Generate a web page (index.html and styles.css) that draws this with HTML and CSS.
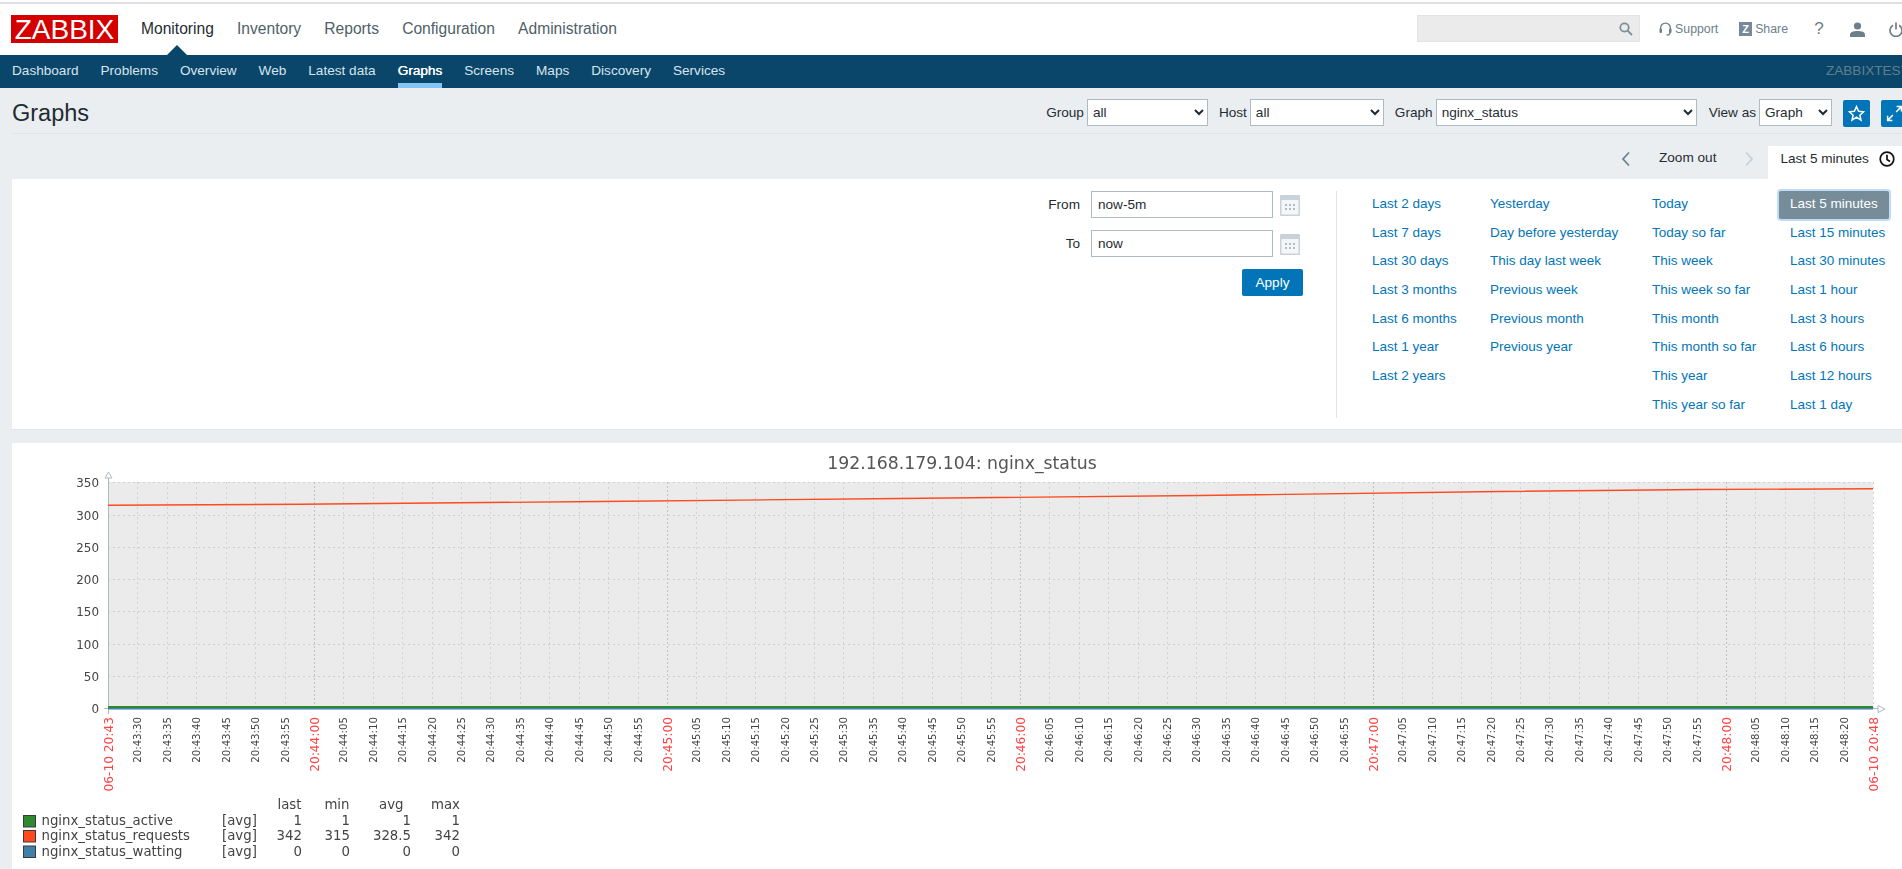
FILE: index.html
```html
<!DOCTYPE html>
<html lang="en">
<head>
<meta charset="utf-8">
<title>Graphs</title>
<link rel="stylesheet" href="styles.css">
</head>
<body>
<div class="page">
  <div class="edge"></div>
  <header class="top">
    <div class="logo">ZABBIX</div>
    <nav class="mainnav">
      <a class="on">Monitoring<i class="caret"></i></a><a>Inventory</a><a>Reports</a><a>Configuration</a><a>Administration</a>
    </nav>
    <div class="tools">
      <div class="search">
        <svg class="ic-search" viewBox="0 0 14 14"><circle cx="5.500" cy="5.500" r="4.200"/><path d="M8.600 8.600 13 13"/></svg>
      </div>
      <a class="tool support"><svg viewBox="0 0 13 14"><path d="M1.600 8V6a4.900 4.900 0 0 1 9.800 0v2"/><rect class="fill" x=".5" y="6.500" width="2.500" height="4.500" rx="1"/><rect class="fill" x="10" y="6.500" width="2.500" height="4.500" rx="1"/><path d="M11 10.500c0 2-1.600 2.600-3.500 2.600"/></svg>Support</a>
      <a class="tool share"><span class="zbox">Z</span>Share</a>
      <span class="help">?</span>
      <svg class="ic-user" viewBox="0 0 15 15"><circle class="fill" cx="7.500" cy="4" r="3.600"/><path class="fill" d="M0 15v-2.400C0 10 3.500 9 7.500 9s7.500 1 7.500 3.600V15z"/></svg>
      <svg class="ic-power" viewBox="0 0 14 15"><path d="M4 3.200a6 6 0 1 0 6 0M7 .5v7"/></svg>
    </div>
  </header>
  <nav class="subnav">
    <a>Dashboard</a><a>Problems</a><a>Overview</a><a>Web</a><a>Latest data</a><a class="on">Graphs</a><a>Screens</a><a>Maps</a><a>Discovery</a><a>Services</a>
    <span class="server">ZABBIXTEST</span>
  </nav>
  <div class="titlebar">
    <h1>Graphs</h1>
    <form class="filters">
      <label>Group</label>
      <select class="s-group"><option>all</option></select>
      <label class="lg">Host</label>
      <select class="s-host"><option>all</option></select>
      <label class="lg">Graph</label>
      <select class="s-graph"><option>nginx_status</option></select>
      <label class="lg">View as</label>
      <select class="s-view"><option>Graph</option></select>
      <button type="button" class="iconbtn first"><svg viewBox="0 0 16 16"><path d="M8 1.500l2 4.400 4.700.5-3.500 3.200 1 4.700L8 11.400l-4.200 2.900 1-4.700L1.300 6.400l4.700-.5z"/></svg></button>
      <button type="button" class="iconbtn"><svg viewBox="0 0 16 16"><path d="M9.500 6.500 14 2M10 1.500h4.500V6M6.500 9.500 2 14M1.500 10v4.500H6"/></svg></button>
    </form>
  </div>
  <div class="timebar">
    <svg class="chev" viewBox="0 0 10 16"><path d="M8 1.500 2 8l6 6.500"/></svg>
    <a class="zoomout">Zoom out</a>
    <svg class="chev off" viewBox="0 0 10 16"><path d="M2 1.500 8 8l-6 6.500"/></svg>
    <div class="tab">Last 5 minutes<svg class="clock" viewBox="0 0 16 16"><circle cx="8" cy="8" r="6.800"/><path d="M8 3.800V8.500l3 2"/></svg></div>
  </div>
  <section class="panel picker">
    <div class="range">
      <div class="rangerow"><label>From</label><input value="now-5m"><svg class="cal" viewBox="0 0 20 21"><rect width="20" height="21" rx="1"/><rect class="cal-in" x="1.500" y="5" width="17" height="14.500"/><path class="cal-dots" d="M5 9h2v2H5zM9 9h2v2H9zM13 9h2v2h-2zM5 13h2v2H5zM9 13h2v2H9zM13 13h2v2h-2z"/></svg></div>
      <div class="rangerow"><label>To</label><input value="now"><svg class="cal" viewBox="0 0 20 21"><rect width="20" height="21" rx="1"/><rect class="cal-in" x="1.500" y="5" width="17" height="14.500"/><path class="cal-dots" d="M5 9h2v2H5zM9 9h2v2H9zM13 9h2v2h-2zM5 13h2v2H5zM9 13h2v2H9zM13 13h2v2h-2z"/></svg></div>
      <button type="button" class="apply">Apply</button>
    </div>
    <div class="quick">
      <div class="col c1"><a>Last 2 days</a><a>Last 7 days</a><a>Last 30 days</a><a>Last 3 months</a><a>Last 6 months</a><a>Last 1 year</a><a>Last 2 years</a></div>
      <div class="col c2"><a>Yesterday</a><a>Day before yesterday</a><a>This day last week</a><a>Previous week</a><a>Previous month</a><a>Previous year</a></div>
      <div class="col c3"><a>Today</a><a>Today so far</a><a>This week</a><a>This week so far</a><a>This month</a><a>This month so far</a><a>This year</a><a>This year so far</a></div>
      <div class="col c4"><a class="sel">Last 5 minutes</a><a>Last 15 minutes</a><a>Last 30 minutes</a><a>Last 1 hour</a><a>Last 3 hours</a><a>Last 6 hours</a><a>Last 12 hours</a><a>Last 1 day</a></div>
    </div>
  </section>
  <section class="panel graphpanel">
    <svg id="graph" class="graph" viewBox="12 443 1908 427" width="1908" height="427"></svg>
  </section>
</div>
<script src="graph.js"></script>
</body>
</html>
```

FILE: styles.css
```css
html, body { margin: 0; height: 100%; overflow: hidden; }
body { background: #ebeef0; font-family: "Liberation Sans", Arial, sans-serif; font-size: 13.6px; color: #1f2c33; }
a { cursor: pointer; }
.page { width: 1920px; height: 869px; overflow: hidden; }
.edge { height: 2px; background: #fff; border-bottom: 2px solid #dfe0e7; }

.top { height: 51px; background: #fff; display: flex; box-sizing: border-box; padding-left: 11px; }
.logo { width: 107px; height: 28px; margin-top: 11px; background: #d40000; color: #fff; font-size: 28px; line-height: 29px; text-align: center; }
.mainnav { display: flex; gap: 23.200px; margin-left: 23px; font-size: 15.6px; line-height: 49px; color: #4e5f69; }
.mainnav a { position: relative; height: 51px; }
.mainnav a.on { color: #1f2c33; }
.caret { position: absolute; left: 26px; bottom: 0; width: 0; height: 0; border: 10.500px solid transparent; border-top: 0; border-bottom-color: #0a466a; }

.tools { margin-left: auto; margin-right: 17px; display: flex; align-items: flex-start; color: #6c7f8a; font-size: 12.300px; }
.search { width: 223px; height: 27px; margin: 11px 1px 0 0; background: #ebebeb; border: 1px solid #e3e3e3; box-sizing: border-box; display: flex; align-items: center; justify-content: flex-end; padding-right: 6px; }
.ic-search { width: 14px; height: 14px; fill: none; stroke: #7d8f99; stroke-width: 1.800; }
.tool { display: flex; align-items: center; height: 27px; margin-top: 11px; white-space: nowrap; }
.tool svg { width: 13px; height: 14px; fill: none; stroke: #6c7f8a; stroke-width: 1.300; margin-right: 3px; }
.tool svg .fill, .ic-user .fill { fill: #6c7f8a; stroke: none; }
.support { margin-left: 18px; }
.share { margin-left: 21px; }
.zbox { width: 13px; height: 14px; background: #76889a; color: #fff; font-weight: 700; font-size: 11px; line-height: 14px; text-align: center; margin-right: 3px; }
.help { margin: 13px 0 0 26px; font-size: 17px; line-height: 24px; width: 10px; text-align: center; }
.ic-user { width: 15px; height: 15px; margin: 18px 0 0 26px; }
.ic-power { width: 14px; height: 15px; margin: 18px 0 0 24px; fill: none; stroke: #6c7f8a; stroke-width: 1.700; }

.subnav { height: 33px; background: #0a466a; display: flex; gap: 22px; padding-left: 12px; line-height: 32px; color: #d7e4ec; position: relative; }
.subnav a { height: 33px; box-sizing: border-box; white-space: nowrap; }
.subnav a.on { color: #fff; border-bottom: 5px solid #84c5f4; text-shadow: .3px 0 0 #fff; }
.server { margin-left: auto; margin-right: 11px; color: #5f7f91; }

.titlebar { height: 45px; margin-left: 11px; border-bottom: 1px solid #dfe4e7; display: flex; align-items: flex-start; justify-content: space-between; }
h1 { margin: 0 0 0 1px; font-size: 23.500px; font-weight: 400; line-height: 51px; color: #1f2c33; }
.filters { display: flex; align-items: flex-start; margin: 11px 12px 0 0; }
.filters label { line-height: 27px; margin-right: 3px; color: #1f2c33; }
.filters label.lg { margin-left: 11px; }
select { height: 27px; box-sizing: border-box; background: #fff; border: 1px solid #acbbc4; font: inherit; color: #1f2c33; border-radius: 0; padding: 0 0 0 1px; }
.s-group { width: 121px; }
.s-host { width: 134px; }
.s-graph { width: 261px; margin-right: 1px; }
.s-view { width: 73px; }
.iconbtn { width: 27px; height: 27px; margin: 1px 0 0 11px; padding: 5px; background: #0275b8; border: 0; border-radius: 2px; }
.iconbtn svg { display: block; width: 17px; height: 17px; fill: none; stroke: #fff; stroke-width: 1.400; }

.timebar { height: 45px; display: flex; align-items: flex-start; padding-left: 1621px; }
.chev { width: 10px; height: 16px; margin-top: 17px; fill: none; stroke: #6b8190; stroke-width: 1.800; }
.chev.off { stroke: #c6d1d7; margin-left: 28px; }
.zoomout { margin: 0 0 0 28px; line-height: 48px; color: #1f2c33; white-space: nowrap; }
.tab { margin: 12px 0 -1px 14px; height: 34px; width: 150px; background: #fff; padding-left: 12px; box-sizing: border-box; display: flex; line-height: 25px; align-items: flex-start; white-space: nowrap; position: relative; }
.clock { width: 16px; height: 16px; margin: 5px 0 0 10px; fill: none; stroke: #111; stroke-width: 1.700; }

.panel { background: #fff; margin-left: 12px; }
.picker { height: 251px; box-sizing: border-box; border-bottom: 1px solid #e0e5e8; display: flex; justify-content: flex-start; padding: 12px 0 0 1036px; }
.range { width: 255px; margin-right: 33px; display: flex; flex-direction: column; align-items: flex-end; }
.rangerow { display: flex; align-items: center; height: 27px; margin-bottom: 12px; width: 100%; justify-content: flex-end; }
.rangerow label { margin-right: 11px; }
.rangerow input { width: 182px; height: 27px; box-sizing: border-box; border: 1px solid #acbbc4; font: inherit; color: #1f2c33; padding: 0 6px; background: #fff; }
.cal { width: 20px; height: 21px; margin: 1px 3px 0 7px; fill: #c9d2d8; }
.cal-in { fill: #f4f6f7; }
.cal-dots { fill: #b0bcc4; }
.apply { width: 61px; height: 27px; margin-top: 0; background: #0275b8; color: #fff; border: 0; border-radius: 2px; font: inherit; padding: 0; }
.quick { border-left: 1px solid #dfe4e7; height: 227px; padding-left: 35px; display: flex; font-size: 13.500px; }
.col { display: flex; flex-direction: column; }
.col a { flex: none; height: 28.700px; line-height: 25.500px; color: #0275b8; white-space: nowrap; }
.c1 { width: 118px; }
.c2 { width: 162px; }
.c3 { width: 138px; }
.col a.sel { margin: 0 0 .7px -11px; width: 110px; height: 28px; box-sizing: border-box; padding-left: 11px; line-height: 26.500px; background: #768d99; color: #fff; border-radius: 2px; box-shadow: 0 0 0 2px #bfdcf5; }

.graphpanel { margin-top: 13px; height: 427px; }
.graph { display: block; filter: blur(.4px); }
.g-title { font: 17.300px "DejaVu Sans", sans-serif; fill: #555; text-anchor: middle; }
.g-y { font: 11.900px "DejaVu Sans", sans-serif; fill: #444; text-anchor: end; }
.g-x { font: 10.200px "DejaVu Sans", sans-serif; fill: #444; text-anchor: end; }
.g-xr { font: 12.200px "DejaVu Sans", sans-serif; fill: #f44; text-anchor: end; }
.g-l { font: 13.300px "DejaVu Sans", sans-serif; fill: #444; }
.g-r { text-anchor: end; }
.g-plot { fill: #ebebeb; }
.g-h { stroke: #cfcfcf; stroke-width: 1; stroke-dasharray: 2 3; fill: none; }
.g-v { stroke: #c9d5da; stroke-width: 1; stroke-dasharray: 2 3; fill: none; }
.g-vm { stroke: #b8c4cb; stroke-width: 1; stroke-dasharray: 2 2; fill: none; }
.g-axis { stroke: #acbcc5; stroke-width: 1; fill: none; }
.g-arrow { fill: #fff; stroke: #acbcc5; stroke-width: 1; }
.g-red { stroke: #ff4a1f; stroke-width: 1.400; fill: none; }
.g-green { stroke: #2f8a2f; stroke-width: 2; }
.g-blue { stroke: #3f7fa8; stroke-width: 1.500; }
.g-sw { stroke: #3a3a3a; stroke-width: 1; }
```

FILE: graph.js
```js
(function () {
  var svg = document.getElementById('graph');
  var NS = 'http://www.w3.org/2000/svg';
  function el(name, attrs, text) {
    var n = document.createElementNS(NS, name);
    for (var k in attrs) n.setAttribute(k, attrs[k]);
    if (text !== undefined) n.textContent = text;
    svg.appendChild(n);
    return n;
  }
  function pad(n) { return (n < 10 ? '0' : '') + n; }

  var left = 108, right = 1873, top = 482, bottom = 708;
  var step = (right - left) / 60;

  el('text', { 'class': 'g-title', x: 962, y: 469 }, '192.168.179.104: nginx_status');
  el('rect', { 'class': 'g-plot', x: left, y: top, width: right - left, height: bottom - top });

  var yVals = [[350, 482.5], [300, 515.5], [250, 547.5], [200, 579.5], [150, 611.5], [100, 644.5], [50, 676.5]];
  yVals.forEach(function (r) {
    el('path', { 'class': 'g-h', d: 'M' + left + ' ' + r[1] + 'H' + right });
    el('text', { 'class': 'g-y', x: 99, y: r[1] + 4.500 }, r[0]);
  });
  el('text', { 'class': 'g-y', x: 99, y: 713 }, 0);

  for (var i = 0; i <= 60; i++) {
    var x = Math.round(left + i * step) + 0.5;
    var secs = 25 + i * 5;
    var m = 43 + Math.floor(secs / 60);
    var s = secs % 60;
    var isMin = s === 0;
    if (i > 0) el('path', { 'class': isMin ? 'g-vm' : 'g-v', d: 'M' + x + ' ' + top + 'V' + bottom });
    var label, cls;
    if (i === 0) { label = '06-10 20:43'; cls = 'g-xr'; }
    else if (i === 60) { label = '06-10 20:48'; cls = 'g-xr'; }
    else { label = '20:' + m + ':' + pad(s); cls = isMin ? 'g-xr' : 'g-x'; }
    var bx = x + (cls === 'g-xr' ? 4 : 3.500);
    el('text', { 'class': cls, x: bx, y: 717, transform: 'rotate(-90 ' + bx + ' 717)' }, label);
  }

  el('path', { 'class': 'g-axis', d: 'M108.500 476V714M104 708.500H1880' });
  el('path', { 'class': 'g-arrow', d: 'M108.500 472l3.500 6h-7z' });
  el('path', { 'class': 'g-arrow', d: 'M1878 705.500l7 3.500-7 3.500z' });

  el('polyline', { 'class': 'g-red', points: '108,505.300 300,504.200 600,501.500 900,498.500 1200,495.500 1500,491.500 1700,489.500 1873,488.800' });
  el('line', { 'class': 'g-green', x1: 108, y1: 707, x2: 1873, y2: 707 });
  el('line', { 'class': 'g-blue', x1: 108, y1: 708.800, x2: 1873, y2: 708.800 });

  [['last', 301.500], ['min', 349.500], ['avg', 403.500], ['max', 460]].forEach(function (h) {
    el('text', { 'class': 'g-l g-r', x: h[1], y: 809 }, h[0]);
  });
  var rows = [
    ['nginx_status_active', '#2f8a2f', ['1', '1', '1', '1'], 825],
    ['nginx_status_requests', '#ff4a1f', ['342', '315', '328.5', '342'], 840],
    ['nginx_status_watting', '#3f7fa8', ['0', '0', '0', '0'], 855.500]
  ];
  var cols = [302, 350, 411, 460];
  rows.forEach(function (r) {
    el('rect', { 'class': 'g-sw', x: 23.500, y: r[3] - 9.500, width: 12, height: 11.500, fill: r[1] });
    el('text', { 'class': 'g-l', x: 41.500, y: r[3] }, r[0]);
    el('text', { 'class': 'g-l', x: 222, y: r[3] }, '[avg]');
    r[2].forEach(function (v, n) {
      el('text', { 'class': 'g-l g-r', x: cols[n], y: r[3] }, v);
    });
  });
})();
```
